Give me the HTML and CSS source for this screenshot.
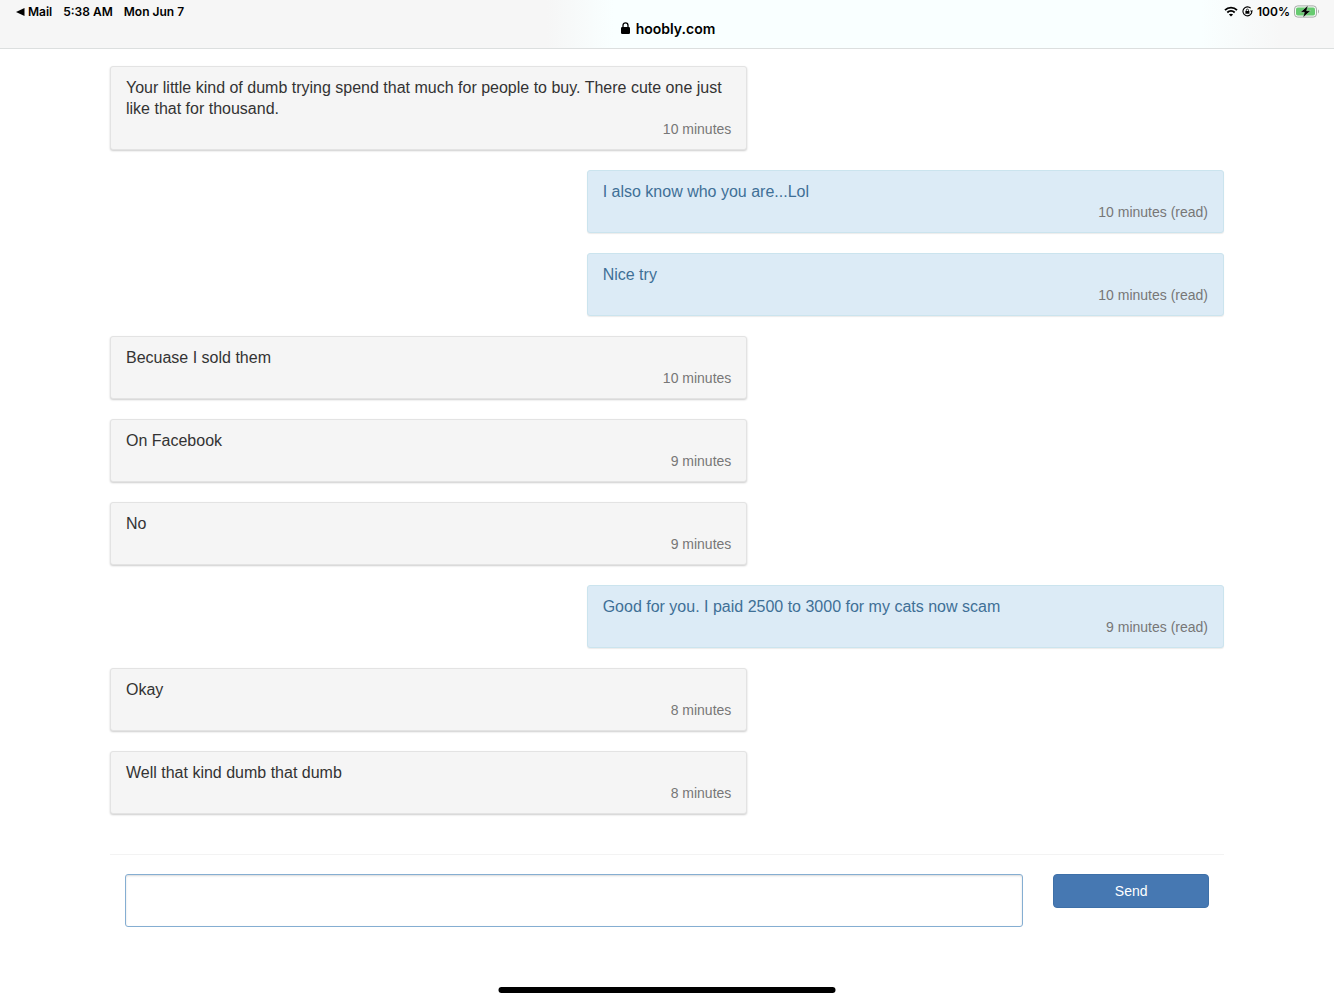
FILE: index.html
```html
<!DOCTYPE html>
<html lang="en">
<head>
  <meta charset="UTF-8" />
  <meta name="viewport" content="width=device-width, initial-scale=1.0" />
  <title>Messages</title>
  <link rel="stylesheet" href="styles.css">
</head>
<body>
  <header class="topbar">
    <div class="status">
      <div class="status-left">
        <a class="back" href="#">
          <svg width="9" height="8" viewBox="0 0 9 8"><path d="M0 4 L8.5 0 V8 Z"/></svg>
          Mail
        </a>
        <span>5:38 AM</span>
        <span>Mon Jun 7</span>
      </div>
      <div class="status-right">
        <svg width="14" height="11" viewBox="0 0 14 11">
          <path d="M1 4.2 C4.3 0.8 9.7 0.8 13 4.2 M3.3 6.5 C5.4 4.5 8.6 4.5 10.7 6.5" fill="none" stroke="#000" stroke-width="1.8"/>
          <path d="M7 10.6 L4.9 8.4 C6.1 7.4 7.9 7.4 9.1 8.4 Z"/>
        </svg>
        <svg width="11" height="11" viewBox="0 0 11 11">
          <path d="M8.7 2.2 A4.5 4.5 0 1 0 9.9 6.2" fill="none" stroke="#000" stroke-width="1.1"/>
          <path d="M8 4.4 H11 L9.6 6.8 Z M3.4 5 H7.4 V7.8 H3.4 Z"/>
          <path d="M4.3 5.2 V4.2 A1.1 1.1 0 0 1 6.5 4.2 V5.2" fill="none" stroke="#000" stroke-width="0.8"/>
        </svg>
        <span>100%</span>
        <svg class="battery" width="25" height="13" viewBox="0 0 25 13">
          <rect x="0.5" y="0.9" width="22" height="11.2" rx="3.2" fill="#f5faf6" stroke="#a5aaa6"/>
          <rect x="2" y="2.4" width="19" height="8.2" rx="1.8" fill="#67cb70"/>
          <path d="M24 4.6 C25.2 5.2 25.2 7.8 24 8.4 Z" fill="#a5aaa6"/>
          <path d="M14 0.4 L6.4 7.3 H10.4 L9 12.6 L16.6 5.7 H12.6 Z" stroke="#dff5e1" stroke-width="0.4"/>
        </svg>
      </div>
    </div>
    <div class="address">
      <svg width="9" height="12" viewBox="0 0 9 12">
        <rect x="0" y="5" width="9" height="7" rx="1.2"/>
        <path d="M2 5.6 V3.4 A2.5 2.6 0 0 1 7 3.4 V5.6" fill="none" stroke="#000" stroke-width="1.3"/>
      </svg>
      <span>hoobly.com</span>
    </div>
  </header>

  <main class="container">
    <div class="messages">
      <div class="msg">
        <p>Your little kind of dumb trying spend that much for people to buy. There cute one just like that for thousand.</p>
        <small>10 minutes</small>
      </div>
      <div class="msg mine">
        <p>I also know who you are...Lol</p>
        <small>10 minutes (read)</small>
      </div>
      <div class="msg mine">
        <p>Nice try</p>
        <small>10 minutes (read)</small>
      </div>
      <div class="msg">
        <p>Becuase I sold them</p>
        <small>10 minutes</small>
      </div>
      <div class="msg">
        <p>On Facebook</p>
        <small>9 minutes</small>
      </div>
      <div class="msg">
        <p>No</p>
        <small>9 minutes</small>
      </div>
      <div class="msg mine">
        <p>Good for you. I paid 2500 to 3000 for my cats now scam</p>
        <small>9 minutes (read)</small>
      </div>
      <div class="msg">
        <p>Okay</p>
        <small>8 minutes</small>
      </div>
      <div class="msg">
        <p>Well that kind dumb that dumb</p>
        <small>8 minutes</small>
      </div>
    </div>

    <form class="reply">
      <textarea aria-label="Message"></textarea>
      <button type="button">Send</button>
    </form>
  </main>

  <div class="home-bar"></div>
</body>
</html>
```
FILE: styles.css
```css
* {
  box-sizing: border-box;
}
body {
  margin: 0;
  background: #fff;
  color: #333;
  font-family: "Liberation Sans", Arial, sans-serif;
  font-size: 16px;
  line-height: 21px;
}

/* browser bar */
.topbar {
  height: 49px;
  background: linear-gradient(to right, #f6f6f6 41%, #f9ffff 46%, #f9ffff 90%, #f7f7f7 96%);
  border-bottom: 1px solid #dcdfdf;
  color: #000;
  font-family: Inter, sans-serif;
}
.status {
  display: flex;
  justify-content: space-between;
  height: 20px;
  padding: 3px 15px 0 16px;
  font-size: 12px;
  font-weight: 600;
  line-height: 17px;
}
.status-left {
  display: flex;
  gap: 11px;
}
.status-right {
  display: flex;
  align-items: center;
  gap: 4px;
}
.back {
  display: flex;
  align-items: center;
  gap: 3px;
  color: #000;
  text-decoration: none;
}
.address {
  display: flex;
  justify-content: center;
  align-items: center;
  gap: 6px;
  height: 16px;
  padding-left: 2px;
  font-size: 14px;
  font-weight: 600;
}

/* conversation */
.container {
  padding: 17px 110px 0;
}
.messages {
  display: grid;
  grid-template-columns: repeat(12, 1fr);
  column-gap: 30px;
  row-gap: 20px;
  padding-bottom: 40px;
  border-bottom: 1px solid #f3f3f3;
}
.msg {
  grid-column: 1 / span 7;
  padding: 10px 15px 9px;
  background: #f5f5f5;
  border: 1px solid #e3e3e3;
  border-radius: 3px;
  box-shadow: 0 1px 2px rgba(0,0,0,0.2);
}
.msg p {
  margin: 0;
}
.msg small {
  display: block;
  color: #777;
  font-size: 14px;
  text-align: right;
}
.mine {
  grid-column: 6 / span 7;
  background: #dcebf6;
  border-color: #cbe4ee;
  box-shadow: 0 1px 1px rgba(0,0,0,0.08);
  color: #3f7096;
}

/* reply form */
.reply {
  display: grid;
  grid-template-columns: repeat(12, 1fr);
  column-gap: 30px;
  align-items: start;
  padding: 19px 15px 0;
}
.reply textarea {
  grid-column: span 10;
  width: 100%;
  height: 53px;
  padding: 6px 12px;
  border: 1px solid #85aed2;
  border-radius: 3px;
  box-shadow: inset 0 1px 2px rgba(0,0,0,0.15);
  font: inherit;
  resize: none;
}
.reply button {
  grid-column: span 2;
  height: 34px;
  border: 1px solid #3e70a8;
  border-radius: 4px;
  background: #4678b2;
  color: #fff;
  font-family: inherit;
  font-size: 14px;
}

.home-bar {
  position: fixed;
  bottom: 7px;
  left: 50%;
  width: 337px;
  height: 6px;
  transform: translateX(-50%);
  border-radius: 3px;
  background: #000;
}
```
